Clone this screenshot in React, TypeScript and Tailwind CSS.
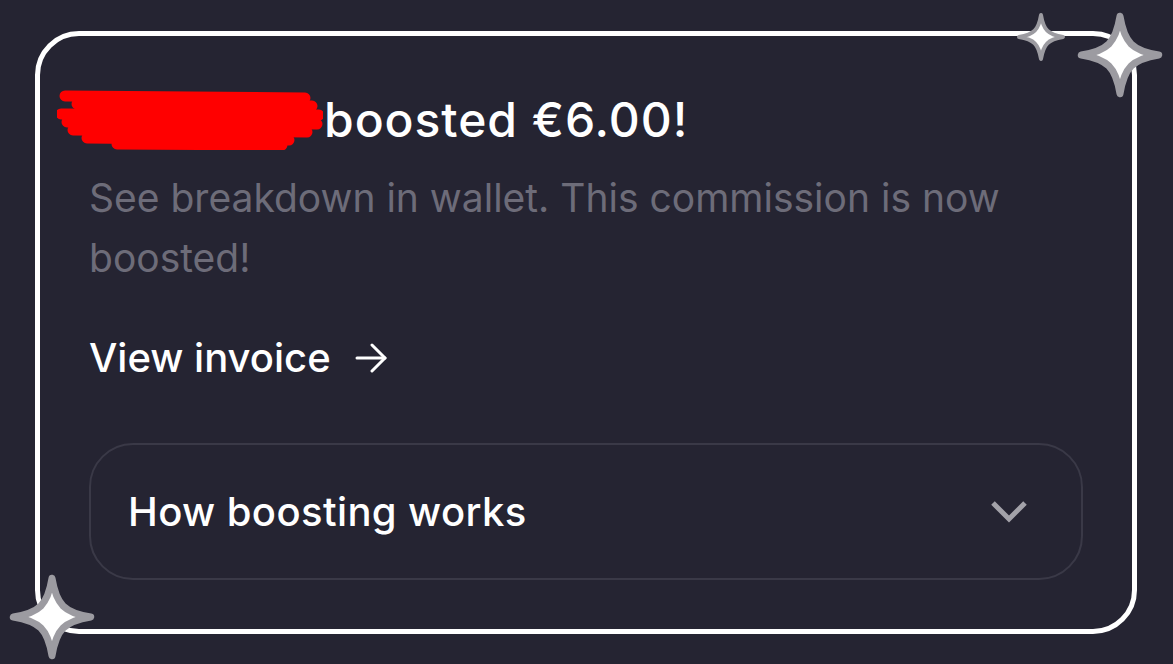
function Sparkle({ className }: { className: string }) {
  return (
    <svg className={className} viewBox="0 0 100 100" fill="none">
      <path
        d="M50 6 C55 36 64 45 94 50 C64 55 55 64 50 94 C45 64 36 55 6 50 C36 45 45 36 50 6 Z"
        fill="#ffffff"
        stroke="#9c9ba1"
        strokeWidth={8}
        strokeLinejoin="round"
      />
    </svg>
  )
}

// red marker strokes hiding the name
function Scribble() {
  return (
    <svg className="-ml-[32px] -my-[6px] h-[60px] w-[266px] shrink-0" viewBox="0 0 266 60" fill="none">
      <g stroke="#ff0000" strokeLinecap="round" strokeWidth={11}>
        <path d="M8 6 L248 8" />
        <path d="M20 14 L255 16" />
        <path d="M4 24 L262 25" />
        <path d="M10 32 L260 34" />
        <path d="M16 40 L250 42" />
        <path d="M30 48 L232 50" />
        <path d="M60 54 L225 55" />
      </g>
    </svg>
  )
}

export default function App() {
  return (
    <div className="min-h-[664px] w-full bg-[#252432] pl-[35px] pt-[31px] font-['Inter',sans-serif]">
      <div className="relative flex h-[603px] w-[1102px] flex-col rounded-[44px] border-[5px] border-white px-[49px] pt-[56px]">
        <h1 className="flex h-[56px] items-center text-[48px] font-medium leading-none tracking-[0.02em] text-white">
          <Scribble />
          <span className="ml-[1px]">boosted €6.00!</span>
        </h1>

        <p className="mt-[20px] text-[39px] leading-[60px] text-[#6d6c79]">
          See breakdown in wallet. This commission is now boosted!
        </p>

        <a className="mt-[46px] flex h-[48px] items-center gap-[24px] text-[40px] font-medium text-white">
          View invoice
          <svg className="h-[30px] w-[32px]" viewBox="0 0 32 30" fill="none" stroke="currentColor" strokeWidth={3} strokeLinecap="round" strokeLinejoin="round">
            <path d="M2 15 H30" />
            <path d="M17 2 L30 15 L17 28" />
          </svg>
        </a>

        <div className="mt-[61px] flex h-[137px] items-center justify-between rounded-[44px] border-2 border-[#3a3947] pl-[37px] pr-[54px]">
          <span className="text-[40px] font-medium tracking-[0.01em] text-white">How boosting works</span>
          <svg className="h-[24px] w-[36px] text-[#a3a2a9]" viewBox="0 0 36 24" fill="none" stroke="currentColor" strokeWidth={5}>
            <path d="M2 3 L18 19 L34 3" />
          </svg>
        </div>

        {/* sparkles sit over the border */}
        <Sparkle className="absolute -right-[32px] -top-[25px] h-[88px] w-[88px]" />
        <Sparkle className="absolute right-[66px] -top-[24px] h-[50px] w-[50px]" />
        <Sparkle className="absolute -bottom-[32px] -left-[32px] h-[88px] w-[88px]" />
      </div>
    </div>
  )
}
